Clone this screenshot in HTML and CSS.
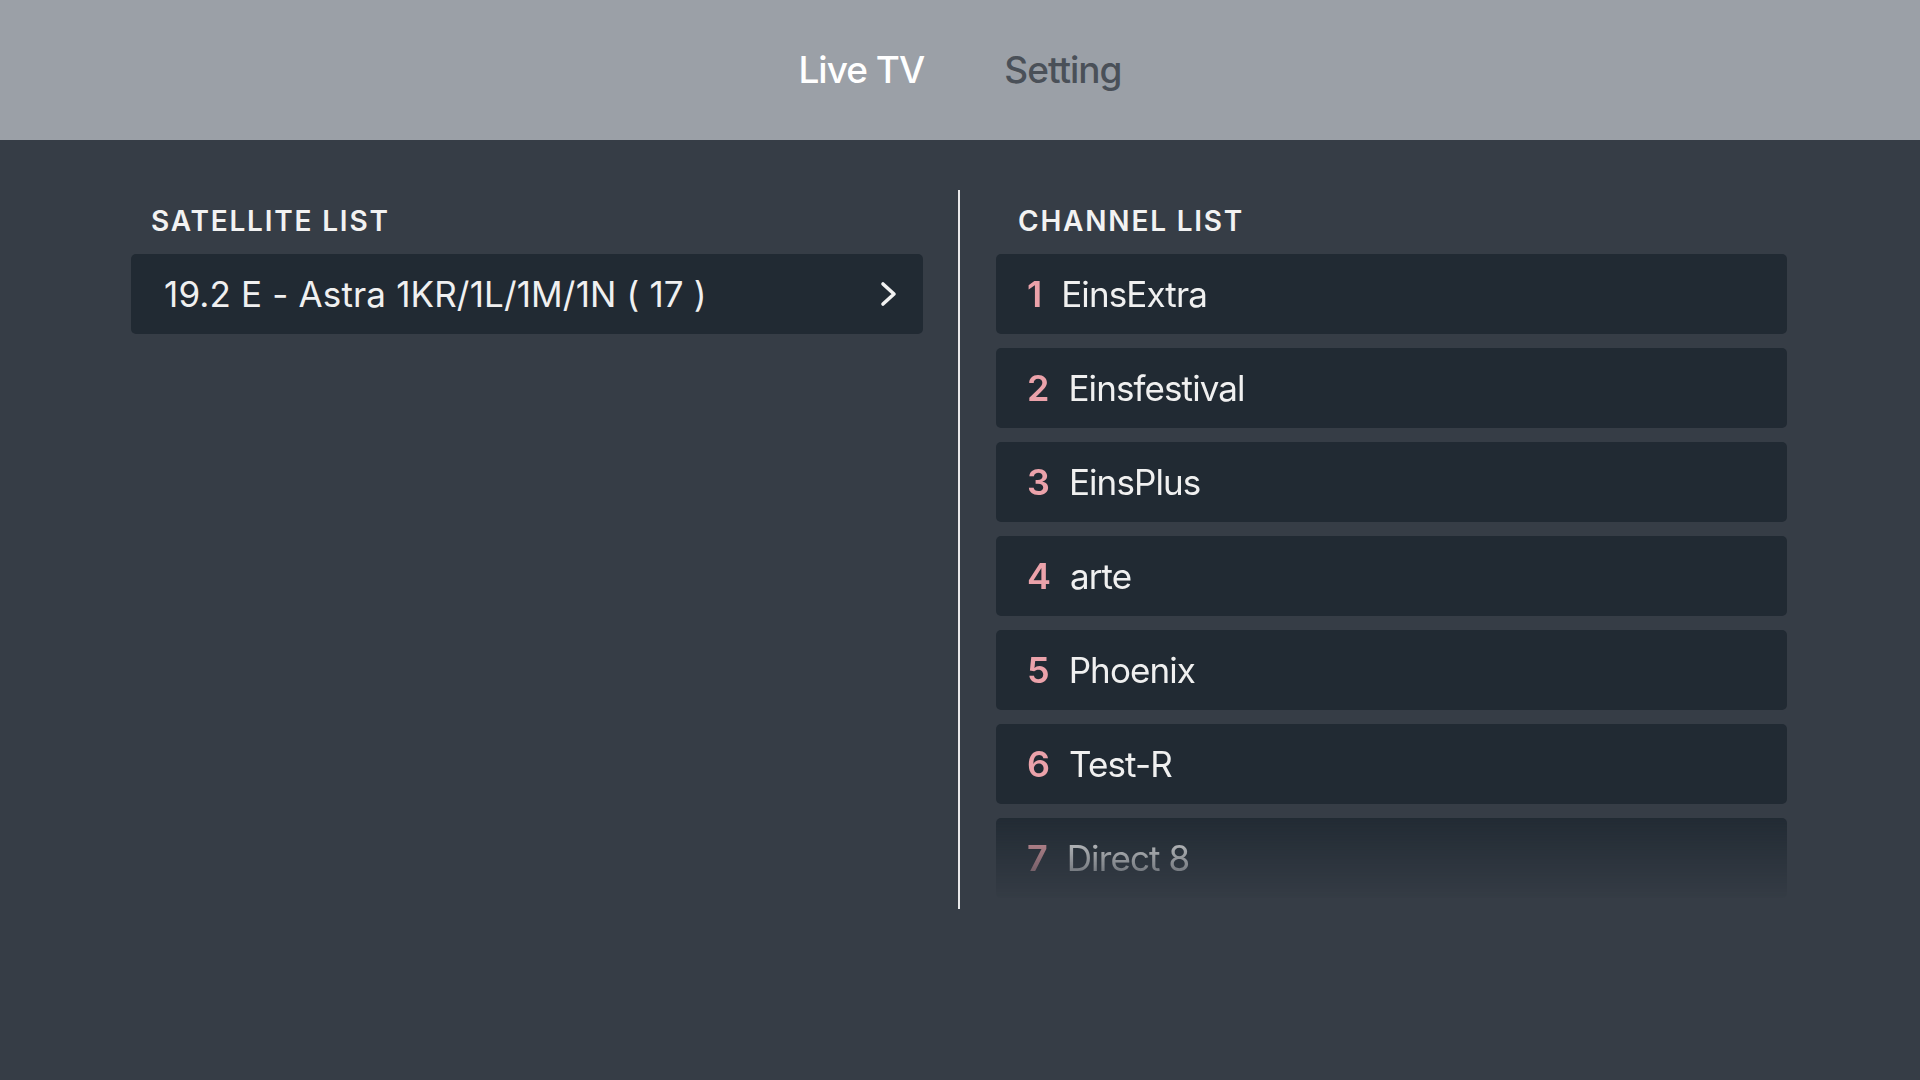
FILE: index.html
```html
<!DOCTYPE html>
<html>
<head>
<meta charset="utf-8">
<link rel="stylesheet" href="styles.css">
</head>
<body>
<header class="topbar">
  <nav class="tabs">
    <span class="tab active">Live TV</span>
    <span class="tab">Setting</span>
  </nav>
</header>
<main class="columns">
  <section class="col col-left">
    <h2 class="label">SATELLITE LIST</h2>
    <div class="card sat">
      <span class="sat-name">19.2 E - Astra 1KR/1L/1M/1N ( 17 )</span>
      <svg class="chev" width="20" height="26" viewBox="0 0 20 26"><polyline points="4,3 15,13 4,23" fill="none" stroke="#f2f2f2" stroke-width="3.6" stroke-linecap="round" stroke-linejoin="round"/></svg>
    </div>
  </section>
  <div class="divider"></div>
  <section class="col col-right">
    <h2 class="label label-ch">CHANNEL LIST</h2>
    <div class="channels">
      <div class="card ch"><span class="num">1</span><span class="name">EinsExtra</span></div>
      <div class="card ch"><span class="num">2</span><span class="name">Einsfestival</span></div>
      <div class="card ch"><span class="num">3</span><span class="name">EinsPlus</span></div>
      <div class="card ch"><span class="num">4</span><span class="name">arte</span></div>
      <div class="card ch"><span class="num">5</span><span class="name">Phoenix</span></div>
      <div class="card ch"><span class="num">6</span><span class="name">Test-R</span></div>
      <div class="card ch"><span class="num">7</span><span class="name">Direct 8</span></div>
    </div>
  </section>
</main>
</body>
</html>
```
FILE: styles.css
```css
* { box-sizing: border-box; }
html, body {
  margin: 0;
  padding: 0;
  width: 1920px;
  height: 1080px;
  overflow: hidden;
  background: #363d46;
  font-family: Inter, "Noto Sans", "Liberation Sans", sans-serif;
  color: #f0f0f0;
}
.topbar {
  height: 140px;
  background: #9ba0a7;
  display: flex;
  align-items: center;
  justify-content: center;
}
.tabs {
  display: flex;
  gap: 80px;
  padding-left: 0;
}
.tab {
  font-size: 37px;
  font-weight: 500;
  color: #4a5058;
  line-height: 46px;
  letter-spacing: -1px;
}
.tab.active { color: #ffffff; }

.columns {
  display: flex;
  padding: 50px 133px 0 131px;
}
.col {
  height: 719px;
  padding-top: 14px;
}
.col-left { width: 792px; }
.col-right { flex: 1; }
.divider {
  width: 2px;
  height: 719px;
  background: #e9e9ea;
  margin: 0 36px 0 35px;
}
.label {
  margin: 0 0 16px 20px;
  font-size: 28px;
  line-height: 34px;
  font-weight: 600;
  letter-spacing: 1.8px;
  color: #f2f2f2;
}
.label-ch { margin-left: 22px; }
.card {
  height: 80px;
  background: #212a33;
  border-radius: 5px;
  display: flex;
  align-items: center;
}
.sat {
  justify-content: space-between;
  padding: 0 24px 0 33px;
}
.sat-name {
  font-size: 35px;
  color: #f0f0f0;
  letter-spacing: 0.15px;
}
.chev { display: block; }

.channels {
  display: flex;
  flex-direction: column;
  gap: 14px;
  -webkit-mask-image: linear-gradient(to bottom, #000 0, #000 560px, transparent 648px);
  mask-image: linear-gradient(to bottom, #000 0, #000 560px, transparent 648px);
}
.ch {
  padding-left: 31px;
  gap: 19px;
}
.num {
  font-size: 36px;
  font-weight: 600;
  color: #eba2aa;
}
.name {
  font-size: 35px;
  color: #f0f0f0;
  letter-spacing: -0.9px;
}
```
